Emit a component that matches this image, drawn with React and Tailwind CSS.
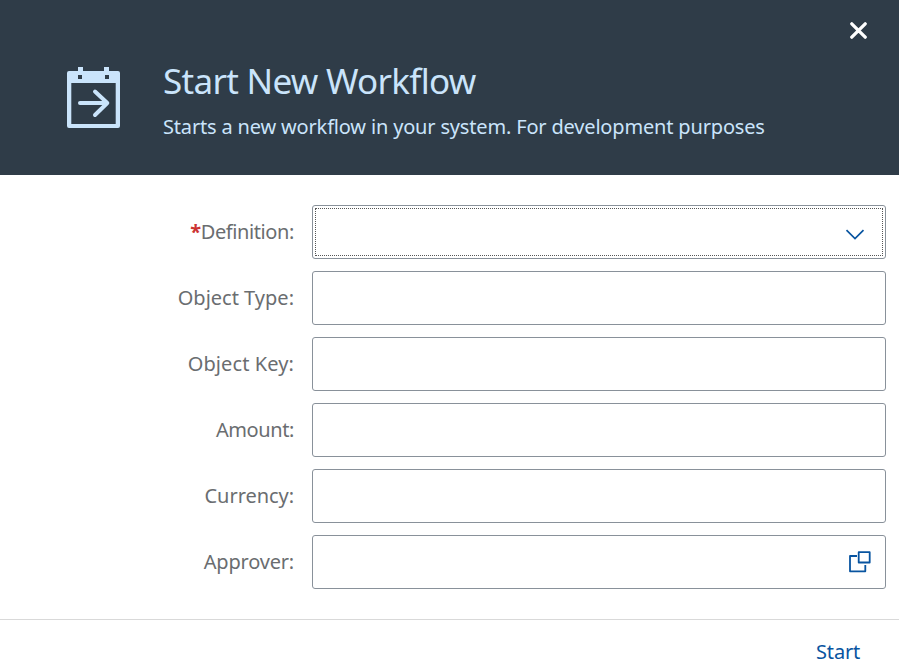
const fields = [
  { label: "Definition", tracking: "tracking-[-0.4px]", required: true, kind: "select" },
  { label: "Object Type", tracking: "tracking-[0px]" },
  { label: "Object Key", tracking: "tracking-[0.1px]" },
  { label: "Amount", tracking: "tracking-[-0.4px]" },
  { label: "Currency", tracking: "tracking-[-0.05px]" },
  { label: "Approver", tracking: "tracking-[-0.2px]", kind: "valueHelp" },
];

function WorkflowIcon() {
  return (
    <svg className="block h-[61px] w-[54px]" viewBox="0 0 54 61" fill="none">
      <path
        fill="#cae4fb"
        fillRule="evenodd"
        d="M11 0h5v4h21V0h5v4h9a2 2 0 0 1 2 2v53a2 2 0 0 1-2 2H2a2 2 0 0 1-2-2V6a2 2 0 0 1 2-2h9zM11 8v4h4V8zM38 8v4h4V8zM4.300 16v41h44.400V16z"
      />
      <path d="M13 36h27M28 24.500L40.300 36L28 48" stroke="#cae4fb" strokeWidth="4" strokeLinecap="round" strokeLinejoin="round" />
    </svg>
  );
}

function CloseIcon() {
  return (
    <svg className="block h-[17px] w-[17px]" viewBox="0 0 17 17" fill="none">
      <path d="M1.800 1.800l13.400 13.400M15.200 1.800L1.800 15.200" stroke="#fff" strokeWidth="3.300" strokeLinecap="round" />
    </svg>
  );
}

function Field({ label, tracking, required, kind }) {
  return (
    <div className="flex h-[54px]">
      <label className={`flex w-[294px] items-center justify-end text-[20px] whitespace-nowrap text-[#6a6d70] ${tracking}`}>
        {required && <span className="font-bold text-[#cc3333]">*</span>}
        {label}:
      </label>
      <div className="ml-[18px] flex w-[574px] rounded-[3px] border border-[#89919a] bg-white p-[2px]">
        <div
          className={
            kind === "select"
              ? "flex flex-1 items-center justify-end border border-dotted border-[#555555] pr-[17px]"
              : "flex flex-1 items-center justify-end pr-[12px]"
          }
        >
          {kind === "select" && (
            <svg className="mt-[5px] h-[11px] w-[20px]" viewBox="0 0 20 11" fill="none">
              <path d="M1.500 1.200L10 9.500l8.500-8.300" stroke="#0854a0" strokeWidth="1.700" />
            </svg>
          )}
          {kind === "valueHelp" && (
            <svg className="h-[22px] w-[22px]" viewBox="0 0 22 22" fill="none" stroke="#0854a0" strokeWidth="1.800">
              <path d="M9.700 1.200h11v10.300h-11z" strokeLinejoin="round" />
              <path d="M8 5H1v15.300h15.300V14" strokeLinejoin="round" />
            </svg>
          )}
        </div>
      </div>
    </div>
  );
}

export default function App() {
  return (
    <div className="flex h-[668px] w-[899px] flex-col overflow-hidden bg-white font-['Noto_Sans',sans-serif]">
      <header className="relative flex h-[175px] shrink-0 bg-[#2f3c48] pl-[67px] text-[#cae4fb]">
        <div className="pt-[67px]">
          <WorkflowIcon />
        </div>
        <div className="pt-[57px] pl-[42px] whitespace-nowrap">
          <h1 className="text-[35px] leading-[48px] tracking-[-0.7px]">Start New Workflow</h1>
          <p className="mt-[8px] text-[20px] leading-[28px] tracking-[-0.17px]">Starts a new workflow in your system. For development purposes</p>
        </div>
        <button className="absolute top-[22px] right-[32px]" aria-label="Close">
          <CloseIcon />
        </button>
      </header>
      <main className="flex h-[444px] shrink-0 flex-col gap-3 pt-[30px]">
        {fields.map((field) => (
          <Field key={field.label} {...field} />
        ))}
      </main>
      <footer className="flex h-[49px] shrink-0 justify-end border-t border-[#d9d9d9] pr-[39px]">
        <button className="mt-[18px] h-[28px] text-[20px] leading-[28px] tracking-[-0.2px] text-[#0854a0]">Start</button>
      </footer>
    </div>
  );
}
